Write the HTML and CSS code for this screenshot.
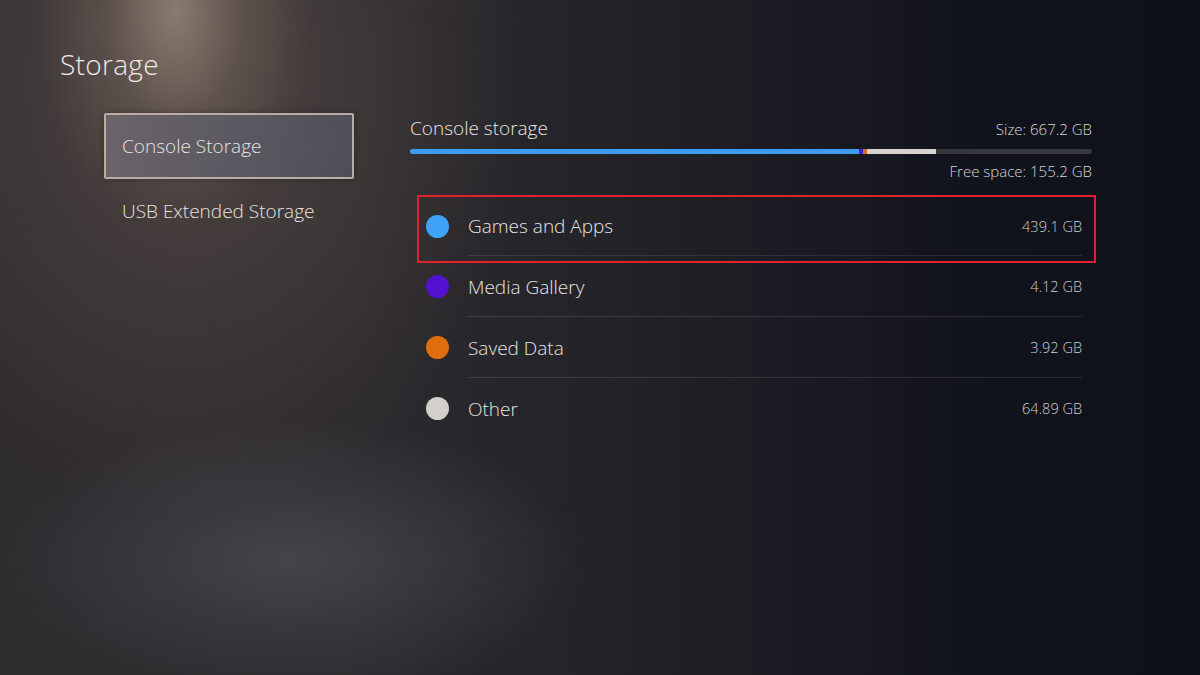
FILE: index.html
```html
<!DOCTYPE html>
<html>
<head>
<meta charset="utf-8">
<link rel="stylesheet" href="styles.css">
</head>
<body>
<div class="screen">
  <h1 class="title">Storage</h1>
  <div class="main">
    <nav class="menu">
      <div class="menu-item selected">Console Storage</div>
      <div class="menu-item">USB Extended Storage</div>
    </nav>
    <section class="panel">
      <div class="panel-head">
        <span class="panel-title">Console storage</span>
        <span class="meta">Size: 667.2 GB</span>
      </div>
      <div class="bar">
        <div class="seg blue" style="width:449px"></div>
        <div class="seg purple" style="width:4px"></div>
        <div class="seg orange" style="width:4px"></div>
        <div class="seg grey" style="width:69px"></div>
      </div>
      <div class="free meta">Free space: 155.2 GB</div>
      <ul class="list">
        <li class="row highlighted"><span class="dot blue"></span><span class="name">Games and Apps</span><span class="val">439.1 GB</span></li>
        <li class="row"><span class="dot purple"></span><span class="name">Media Gallery</span><span class="val">4.12 GB</span></li>
        <li class="row"><span class="dot orange"></span><span class="name">Saved Data</span><span class="val">3.92 GB</span></li>
        <li class="row last"><span class="dot grey"></span><span class="name">Other</span><span class="val">64.89 GB</span></li>
      </ul>
    </section>
  </div>
</div>
</body>
</html>
```
FILE: styles.css
```css
* { box-sizing: border-box; }
html, body { margin: 0; padding: 0; }
body {
  width: 1200px;
  height: 675px;
  overflow: hidden;
  font-family: "Open Sans", "Noto Sans", sans-serif;
  font-weight: 300;
  color: #e8e6e4;
}
.screen {
  width: 1200px;
  height: 675px;
  padding: 46px 0 0 60px;
  background:
    radial-gradient(ellipse 140px 220px at 175px 10px, rgba(190,170,150,0.55), rgba(150,130,115,0.25) 50%, rgba(0,0,0,0) 100%),
    radial-gradient(ellipse 340px 440px at 190px 80px, rgba(120,100,90,0.45), rgba(0,0,0,0) 100%),
    radial-gradient(ellipse 300px 140px at 290px 560px, rgba(75,80,85,0.7), rgba(0,0,0,0) 100%),
    linear-gradient(90deg, #2e2b2e 0%, #2c2a2d 30%, #1e1f25 60%, #12141d 80%, #0f111a 100%);
}
.title {
  margin: 0;
  font-size: 28px;
  font-weight: 300;
  line-height: 36px;
  letter-spacing: 0.3px;
  color: #eeeae6;
}
.main {
  display: flex;
  margin-top: 31px;
}
.menu {
  width: 250px;
  margin-left: 44px;
  display: flex;
  flex-direction: column;
}
.menu-item {
  height: 64px;
  padding-left: 18px;
  display: flex;
  align-items: center;
  font-size: 19px;
  color: #e6e3e0;
}
.menu-item.selected {
  height: 66px;
  padding-left: 16px;
  border: 2px solid #b8aca3;
  border-radius: 2px;
  background: linear-gradient(100deg, #6b6469 0%, #5c5962 50%, #4f4e58 100%);
  box-shadow: 0 0 6px rgba(0,0,0,0.3);
}
.panel {
  margin-left: 56px;
  width: 682px;
}
.panel-head {
  display: flex;
  justify-content: space-between;
  align-items: baseline;
  height: 31px;
  padding-top: 2px;
}
.panel-title { font-size: 19px; color: #e8e6e4; }
.meta { font-size: 15px; color: #d8d6d4; }
.bar {
  display: flex;
  height: 5px;
  margin-top: 5px;
  border-radius: 3px;
  overflow: hidden;
  background: #36373d;
}
.seg { height: 100%; }
.seg.blue { background: #3d9cf0; }
.seg.purple { background: #4a1fd0; }
.seg.orange { background: #e06a14; }
.seg.grey { background: #d6d2cd; }
.free {
  text-align: right;
  margin-top: 8px;
  line-height: 18px;
}
.list {
  list-style: none;
  margin: 16px 0 0 8px;
  padding: 0;
  width: 677px;
}
.row {
  position: relative;
  display: flex;
  align-items: center;
  height: 61px;
  padding-left: 8px;
  padding-right: 13px;
}
.row::after {
  content: "";
  position: absolute;
  left: 50px;
  right: 13px;
  bottom: 0;
  height: 1px;
  background: rgba(255,255,255,0.10);
}
.row.last::after { display: none; }
.row.highlighted {
  outline: 2px solid #e0212e;
  outline-offset: -1px;
  height: 66px;
  margin-bottom: -6px;
  padding-bottom: 6px;
}
.row.highlighted::after { bottom: 6px; }
.dot {
  width: 23px;
  height: 23px;
  border-radius: 50%;
  flex: none;
}
.dot.blue { background: #3fa3f7; }
.dot.purple { background: #5311d0; }
.dot.orange { background: #df6e0e; }
.dot.grey { background: #d3cfca; }
.name {
  margin-left: 19px;
  font-size: 19px;
  color: #e6e4e2;
  flex: 1;
}
.val {
  font-size: 14.5px;
  color: #cfcdcb;
}
```
